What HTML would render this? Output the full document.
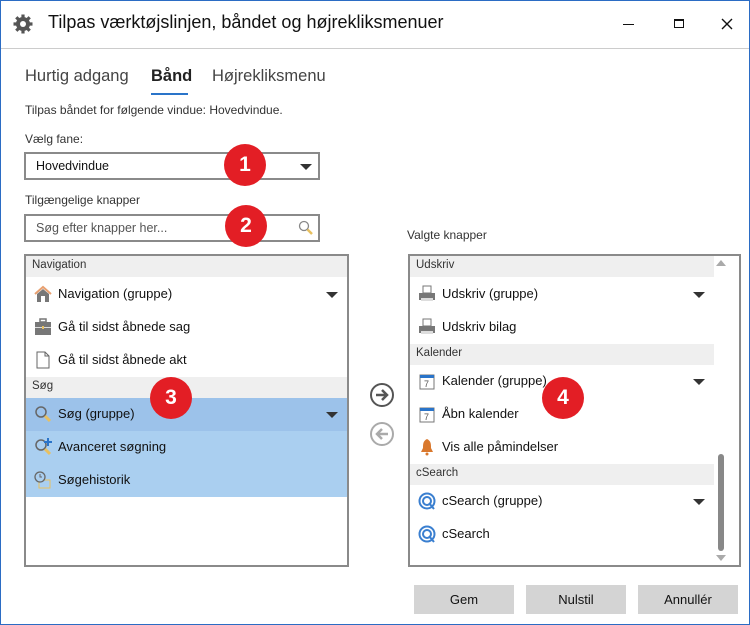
<!DOCTYPE html>
<html><head><meta charset="utf-8"><style>
*{box-sizing:border-box;margin:0;padding:0}
body{width:750px;height:625px;background:#fff;font-family:"Segoe UI","Liberation Sans",sans-serif;color:#111;position:relative;overflow:hidden;font-size:12px}
.win{position:absolute;left:0;top:0;width:750px;height:625px;border:1px solid #2b6cc4}
.a{position:absolute;white-space:nowrap}
.title{left:48px;top:12px;font-size:18px;color:#111}
.sep{left:1px;right:1px;top:48px;height:1px;background:#ccc}
.tab{top:67px;font-size:16.5px;color:#444}
.box{position:absolute;border:2px solid #8a8a8a;background:#fff}
.tri{position:absolute;width:0;height:0;border-left:6px solid transparent;border-right:6px solid transparent;border-top:6px solid #333}
.hdr{position:absolute;left:0;height:21px;background:#efefef;font-size:11.5px;color:#333;padding:3px 0 0 6px}
.row{position:absolute;left:0;height:33px;font-size:13px;padding:8px 0 0 32px}
.row .ic{position:absolute;left:8px;top:7px;width:18px;height:18px}
.badge{position:absolute;width:42px;height:42px;border-radius:50%;background:#e31e25;color:#fff;font-weight:bold;font-size:21px;text-align:center;line-height:42px;font-family:"Liberation Sans",sans-serif}
.btn{position:absolute;top:585px;width:100px;height:29px;background:#d4d4d4;text-align:center;line-height:29px;font-size:13px}
</style></head><body>
<div class="win"></div>
<svg class="a" style="left:13px;top:14px" width="20" height="20" viewBox="0 0 20 20"><g fill="#555"><circle cx="10" cy="10" r="7"/><g stroke="#555" stroke-width="3.2"><line x1="10" y1="0.5" x2="10" y2="19.5"/><line x1="0.5" y1="10" x2="19.5" y2="10"/><line x1="3.3" y1="3.3" x2="16.7" y2="16.7"/><line x1="16.7" y1="3.3" x2="3.3" y2="16.7"/></g></g><circle cx="10" cy="10" r="3" fill="#fff"/></svg>
<div class="a title">Tilpas værktøjslinjen, båndet og højrekliksmenuer</div>
<div class="a" style="left:623px;top:24px;width:11px;height:1px;background:#111"></div>
<div class="a" style="left:674px;top:19px;width:10px;height:9px;border:1px solid #111;border-top-width:2px"></div>
<svg class="a" style="left:721px;top:18px" width="12" height="12"><path d="M1 1L11 11M11 1L1 11" stroke="#111" stroke-width="1.4"/></svg>
<div class="a sep"></div>
<div class="a tab" style="left:25px">Hurtig adgang</div>
<div class="a tab" style="left:151px;color:#222;font-weight:bold">Bånd</div>
<div class="a" style="left:151px;top:93px;width:37px;height:2px;background:#2a74c9"></div>
<div class="a tab" style="left:212px">Højrekliksmenu</div>
<div class="a" style="left:25px;top:103px;color:#333">Tilpas båndet for følgende vindue: Hovedvindue.</div>
<div class="a" style="left:25px;top:132px;color:#333">Vælg fane:</div>
<div class="box" style="left:24px;top:152px;width:296px;height:28px"><span class="a" style="left:10px;top:5px;font-size:12.5px">Hovedvindue</span><div class="tri" style="left:274px;top:10px"></div></div>
<div class="a" style="left:25px;top:193px;color:#333">Tilgængelige knapper</div>
<div class="box" style="left:24px;top:214px;width:296px;height:28px"><span class="a" style="left:10px;top:5px;font-size:12.5px;color:#555">Søg efter knapper her...</span>
<svg class="a" style="left:272px;top:4px" width="16" height="16"><circle cx="6" cy="6" r="4.5" fill="none" stroke="#888" stroke-width="1.3"/><line x1="9.5" y1="9.5" x2="14" y2="14" stroke="#e8c060" stroke-width="2.5"/></svg></div>
<div class="box" style="left:24px;top:254px;width:325px;height:313px;overflow:hidden">
<div class="hdr" style="top:0;width:321px">Navigation</div>
<div class="row" style="top:22px;width:321px"><svg class="ic" viewBox="0 0 18 18"><path d="M1 9L9 2L17 9" fill="none" stroke="#e8a070" stroke-width="2"/><path d="M3 9V17H15V9L9 4Z" fill="#777"/><rect x="7" y="11" width="4" height="6" fill="#fff"/></svg>Navigation (gruppe)<div class="tri" style="left:300px;top:14px"></div></div>
<div class="row" style="top:55px;width:321px"><svg class="ic" viewBox="0 0 18 18"><rect x="1" y="4" width="16" height="13" fill="#777"/><rect x="6" y="1" width="6" height="3" fill="none" stroke="#777" stroke-width="1.5"/><rect x="1" y="9" width="16" height="1" fill="#ddd"/><rect x="8" y="8" width="2" height="3" fill="#e8c060"/></svg>Gå til sidst åbnede sag</div>
<div class="row" style="top:88px;width:321px"><svg class="ic" viewBox="0 0 18 18"><path d="M3 1H11L15 5V17H3Z" fill="#fff" stroke="#666"/><path d="M11 1V5H15" fill="none" stroke="#666"/></svg>Gå til sidst åbnede akt</div>
<div class="hdr" style="top:121px;width:321px">Søg</div>
<div class="row" style="top:142px;width:321px;background:#9cc2ea"><svg class="ic" viewBox="0 0 18 18"><circle cx="7" cy="7" r="5" fill="none" stroke="#666" stroke-width="1.5"/><line x1="11" y1="11" x2="16" y2="16" stroke="#e8c060" stroke-width="3"/></svg>Søg (gruppe)<div class="tri" style="left:300px;top:14px"></div></div>
<div class="row" style="top:175px;width:321px;background:#aacff0"><svg class="ic" viewBox="0 0 18 18"><circle cx="7" cy="7" r="5" fill="none" stroke="#666" stroke-width="1.5"/><line x1="11" y1="11" x2="16" y2="16" stroke="#e8c060" stroke-width="3"/><path d="M14 0V8M10 4H18" stroke="#2a74c9" stroke-width="2"/></svg>Avanceret søgning</div>
<div class="row" style="top:208px;width:321px;background:#aacff0"><svg class="ic" viewBox="0 0 18 18"><rect x="5" y="9" width="11" height="8" fill="none" stroke="#e8c060"/><circle cx="6" cy="6" r="5" fill="#aacff0" stroke="#666" stroke-width="1.3"/><path d="M6 3V6H8" stroke="#666" fill="none"/></svg>Søgehistorik</div>
</div>
<svg class="a" style="left:369px;top:382px" width="26" height="26"><circle cx="13" cy="13" r="11" fill="none" stroke="#555" stroke-width="2"/><path d="M7 13H18M13 8L18 13L13 18" fill="none" stroke="#555" stroke-width="2.5"/></svg>
<svg class="a" style="left:369px;top:421px" width="26" height="26"><circle cx="13" cy="13" r="11" fill="none" stroke="#aaa" stroke-width="2"/><path d="M19 13H8M13 8L8 13L13 18" fill="none" stroke="#aaa" stroke-width="2.5"/></svg>
<div class="a" style="left:407px;top:228px;color:#333">Valgte knapper</div>
<div class="box" style="left:408px;top:254px;width:333px;height:313px;overflow:hidden">
<div class="hdr" style="top:0;width:304px">Udskriv</div>
<div class="row" style="top:22px;width:304px"><svg class="ic" viewBox="0 0 18 18"><rect x="5" y="1" width="8" height="7" fill="#fff" stroke="#777"/><rect x="1" y="8" width="16" height="7" fill="#777"/><rect x="3" y="13" width="12" height="3" fill="#ddd"/></svg>Udskriv (gruppe)<div class="tri" style="left:283px;top:14px"></div></div>
<div class="row" style="top:55px;width:304px"><svg class="ic" viewBox="0 0 18 18"><rect x="5" y="1" width="8" height="7" fill="#fff" stroke="#777"/><rect x="1" y="8" width="16" height="7" fill="#777"/><rect x="3" y="13" width="12" height="3" fill="#ddd"/></svg>Udskriv bilag</div>
<div class="hdr" style="top:88px;width:304px">Kalender</div>
<div class="row" style="top:109px;width:304px"><svg class="ic" viewBox="0 0 18 18"><rect x="2" y="3" width="14" height="14" fill="#fff" stroke="#777"/><rect x="2" y="3" width="14" height="3" fill="#2a74c9"/><text x="6" y="15" font-size="9" fill="#555" font-family="Liberation Sans">7</text></svg>Kalender (gruppe)<div class="tri" style="left:283px;top:14px"></div></div>
<div class="row" style="top:142px;width:304px"><svg class="ic" viewBox="0 0 18 18"><rect x="2" y="3" width="14" height="14" fill="#fff" stroke="#777"/><rect x="2" y="3" width="14" height="3" fill="#2a74c9"/><text x="6" y="15" font-size="9" fill="#555" font-family="Liberation Sans">7</text></svg>Åbn kalender</div>
<div class="row" style="top:175px;width:304px"><svg class="ic" viewBox="0 0 18 18"><path d="M9 1C5 3 5 6 5 10L3 14H15L13 10C13 6 13 3 9 1Z" fill="#d9782d"/><circle cx="9" cy="16" r="1.5" fill="#d9782d"/></svg>Vis alle påmindelser</div>
<div class="hdr" style="top:208px;width:304px">cSearch</div>
<div class="row" style="top:229px;width:304px"><svg class="ic" viewBox="0 0 18 18"><circle cx="9" cy="9" r="7.5" fill="none" stroke="#3a7fd0" stroke-width="2"/><circle cx="9" cy="9" r="4" fill="none" stroke="#3a7fd0" stroke-width="2"/><line x1="11" y1="11" x2="16" y2="17" stroke="#3a7fd0" stroke-width="2"/></svg>cSearch (gruppe)<div class="tri" style="left:283px;top:14px"></div></div>
<div class="row" style="top:262px;width:304px"><svg class="ic" viewBox="0 0 18 18"><circle cx="9" cy="9" r="7.5" fill="none" stroke="#3a7fd0" stroke-width="2"/><circle cx="9" cy="9" r="4" fill="none" stroke="#3a7fd0" stroke-width="2"/><line x1="11" y1="11" x2="16" y2="17" stroke="#3a7fd0" stroke-width="2"/></svg>cSearch</div>
<div class="a" style="left:306px;top:4px;width:0;height:0;border-left:5px solid transparent;border-right:5px solid transparent;border-bottom:6px solid #aaa"></div>
<div class="a" style="left:306px;top:299px;width:0;height:0;border-left:5px solid transparent;border-right:5px solid transparent;border-top:6px solid #aaa"></div>
<div class="a" style="left:308px;top:198px;width:6px;height:97px;border-radius:3px;background:#888"></div>
</div>
<div class="btn" style="left:414px">Gem</div>
<div class="btn" style="left:526px">Nulstil</div>
<div class="btn" style="left:638px">Annullér</div>
<div class="badge" style="left:224px;top:144px">1</div>
<div class="badge" style="left:225px;top:205px">2</div>
<div class="badge" style="left:150px;top:377px">3</div>
<div class="badge" style="left:542px;top:377px">4</div>
</body></html>
